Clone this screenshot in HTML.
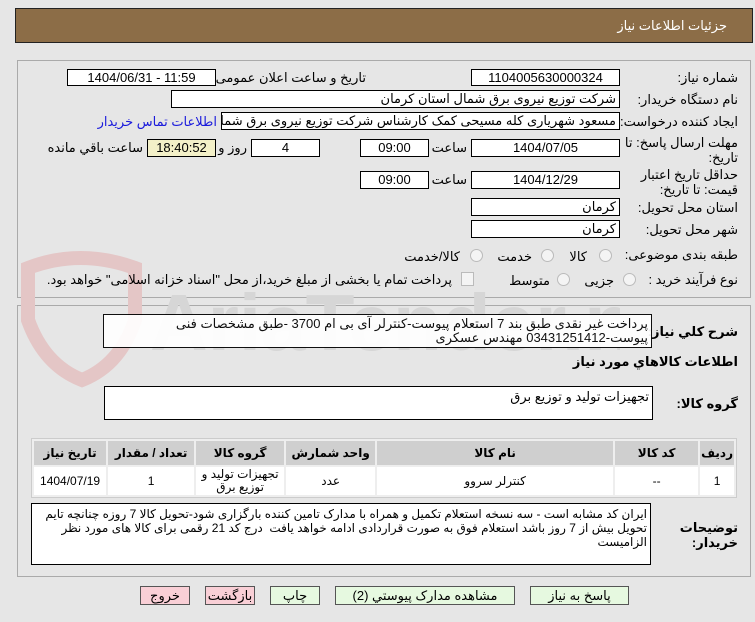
<!DOCTYPE html>
<html><head><meta charset="utf-8"><style>
body{margin:0;width:755px;height:622px;background:#e6e6e6;position:relative;overflow:hidden;font-family:"Liberation Sans","DejaVu Sans",sans-serif;font-size:12px;color:#000}
.a{position:absolute}
.box{position:absolute;background:#fff;border:1px solid #000;box-sizing:border-box;text-align:center;line-height:15px;font-size:13px;white-space:nowrap;overflow:hidden}
.r{direction:rtl;text-align:right;padding-right:3px}
.l{position:absolute;direction:rtl;white-space:nowrap;font-size:13px}
.rad{position:absolute;width:11px;height:11px;border-radius:50%;border:1px solid #bbb;background:#f4f4f4}
.btn{position:absolute;height:19px;border:1px solid #555;box-sizing:border-box;text-align:center;line-height:17px;font-size:13px;direction:rtl}
table{border-collapse:separate;border-spacing:2px;position:absolute;left:31px;top:438px;width:706px;background:#eee;border:1px solid #ccc}
td{text-align:center;font-size:12px;padding:0}
th{background:#cfcfcf;height:22px;font-size:12px}
td{background:#fff;height:28px}
</style></head><body>
<div class="a" style="left:15px;top:8px;width:738px;height:35px;background:#8c6d47;border:1px solid #222;box-sizing:border-box"></div>
<div class="l" style="right:28px;top:18px;color:#fff;font-size:13px">جزئیات اطلاعات نیاز</div>
<div class="a" style="left:17px;top:60px;width:734px;height:238px;border:1px solid #aaa;box-sizing:border-box"></div>
<div class="a" style="left:17px;top:305px;width:734px;height:272px;border:1px solid #aaa;box-sizing:border-box"></div>
<!-- watermark -->
<svg class="a" style="left:0;top:240px" width="620" height="150"><path d="M28 28 Q80 8 135 28 L135 80 Q120 125 82 140 Q44 125 28 80Z" fill="none" stroke="#e4c6c6" stroke-width="14"/><text x="150" y="110" font-size="80" font-family="Liberation Sans" font-weight="bold" fill="#d6d6d6">AriaTender.net</text></svg>

<div class="l" style="right:17px;top:70px">شماره نیاز:</div>
<div class="box" style="left:471px;top:69px;width:149px;height:17px">1104005630000324</div>
<div class="l" style="right:389px;top:70px">تاریخ و ساعت اعلان عمومی:</div>
<div class="box" style="left:67px;top:69px;width:149px;height:17px">1404/06/31 - 11:59</div>

<div class="l" style="right:17px;top:92px">نام دستگاه خریدار:</div>
<div class="box r" style="left:171px;top:90px;width:449px;height:18px">شرکت توزیع نیروی برق شمال استان کرمان</div>

<div class="l" style="right:17px;top:114px">ایجاد کننده درخواست:</div>
<div class="box r" style="left:221px;top:112px;width:399px;height:18px">مسعود شهریاری کله مسیحی کمک کارشناس شرکت توزیع نیروی برق شمال استان کرمان</div>
<div class="l" style="right:538px;top:114px;color:#1a1adc">اطلاعات تماس خریدار</div>

<div class="l" style="right:17px;top:135px;line-height:15px">مهلت ارسال پاسخ: تا<br>تاریخ:</div>
<div class="box" style="left:471px;top:139px;width:149px;height:18px">1404/07/05</div>
<div class="l" style="right:288px;top:140px">ساعت</div>
<div class="box" style="left:360px;top:139px;width:69px;height:18px">09:00</div>
<div class="box" style="left:251px;top:139px;width:69px;height:18px">4</div>
<div class="l" style="right:508px;top:140px">روز و</div>
<div class="box" style="left:147px;top:139px;width:69px;height:18px;background:#f3f0c8">18:40:52</div>
<div class="l" style="right:612px;top:140px">ساعت باقي مانده</div>

<div class="l" style="right:17px;top:167px;line-height:15px">حداقل تاریخ اعتبار<br>قیمت: تا تاریخ:</div>
<div class="box" style="left:471px;top:171px;width:149px;height:18px">1404/12/29</div>
<div class="l" style="right:288px;top:172px">ساعت</div>
<div class="box" style="left:360px;top:171px;width:69px;height:18px">09:00</div>

<div class="l" style="right:17px;top:200px">استان محل تحویل:</div>
<div class="box r" style="left:471px;top:198px;width:149px;height:18px">کرمان</div>
<div class="l" style="right:17px;top:222px">شهر محل تحویل:</div>
<div class="box r" style="left:471px;top:220px;width:149px;height:18px">کرمان</div>

<div class="l" style="right:17px;top:247px">طبقه بندی موضوعی:</div>
<div class="rad" style="left:599px;top:249px"></div><div class="l" style="right:168px;top:249px">کالا</div>
<div class="rad" style="left:541px;top:249px"></div><div class="l" style="right:223px;top:249px">خدمت</div>
<div class="rad" style="left:470px;top:249px"></div><div class="l" style="right:295px;top:249px">کالا/خدمت</div>

<div class="l" style="right:17px;top:272px">نوع فرآیند خرید :</div>
<div class="rad" style="left:623px;top:273px"></div><div class="l" style="right:141px;top:273px">جزیی</div>
<div class="rad" style="left:557px;top:273px"></div><div class="l" style="right:205px;top:273px">متوسط</div>
<div class="a" style="left:461px;top:272px;width:11px;height:12px;border:1px solid #bbb;background:#f4f4f4"></div>
<div class="l" style="right:303px;top:272px">پرداخت تمام یا بخشی از مبلغ خرید،از محل "اسناد خزانه اسلامی" خواهد بود.</div>

<div class="l" style="right:17px;top:324px;font-weight:bold">شرح کلي نياز:</div>
<div class="box r" style="left:103px;top:314px;width:549px;height:34px;white-space:normal;line-height:14px;padding-top:2px;background:#fff;opacity:.93">پرداخت غیر نقدی طبق بند 7 استعلام پیوست-کنترلر آی بی ام 3700 -طبق مشخصات فنی پیوست-03431251412 مهندس عسکری</div>
<div class="l" style="right:17px;top:354px;font-weight:bold">اطلاعات کالاهاي مورد نياز</div>
<div class="l" style="right:17px;top:396px;font-weight:bold">گروه کالا:</div>
<div class="box r" style="left:104px;top:386px;width:549px;height:34px;line-height:16px;padding-top:2px">تجهیزات تولید و توزیع برق</div>

<table dir="rtl">
<tr><th style="width:27px">ردیف</th><th style="width:81px">کد کالا</th><th style="width:234px">نام کالا</th><th style="width:87px">واحد شمارش</th><th style="width:86px">گروه کالا</th><th style="width:84px">تعداد / مقدار</th><th>تاریخ نیاز</th></tr>
<tr><td>1</td><td>--</td><td>کنترلر سروو</td><td>عدد</td><td style="line-height:13px">تجهیزات تولید و توزیع برق</td><td>1</td><td>1404/07/19</td></tr>
</table>

<div class="l" style="right:17px;top:520px;line-height:15px;font-weight:bold">توضیحات<br>خریدار:</div>
<div class="box r" style="left:31px;top:503px;width:620px;height:62px;white-space:normal;line-height:14px;padding-top:3px;padding-left:2px;font-size:12px;letter-spacing:-0.2px">ایران کد مشابه است - سه نسخه استعلام تکمیل و همراه با مدارک تامین کننده بارگزاری شود-تحویل کالا 7 روزه چنانچه تایم تحویل بیش از 7 روز باشد استعلام فوق به صورت قراردادی ادامه خواهد یافت&nbsp; درج کد 21 رقمی برای کالا های مورد نظر الزامیست</div>

<div class="btn" style="left:530px;top:586px;width:99px;background:#e6f9e0">پاسخ به نیاز</div>
<div class="btn" style="left:335px;top:586px;width:180px;background:#e6f9e0">مشاهده مدارک پیوستي (2)</div>
<div class="btn" style="left:270px;top:586px;width:50px;background:#e6f9e0">چاپ</div>
<div class="btn" style="left:205px;top:586px;width:50px;background:#f9cfd6">بازگشت</div>
<div class="btn" style="left:140px;top:586px;width:50px;background:#f9cfd6">خروج</div>
</body></html>
